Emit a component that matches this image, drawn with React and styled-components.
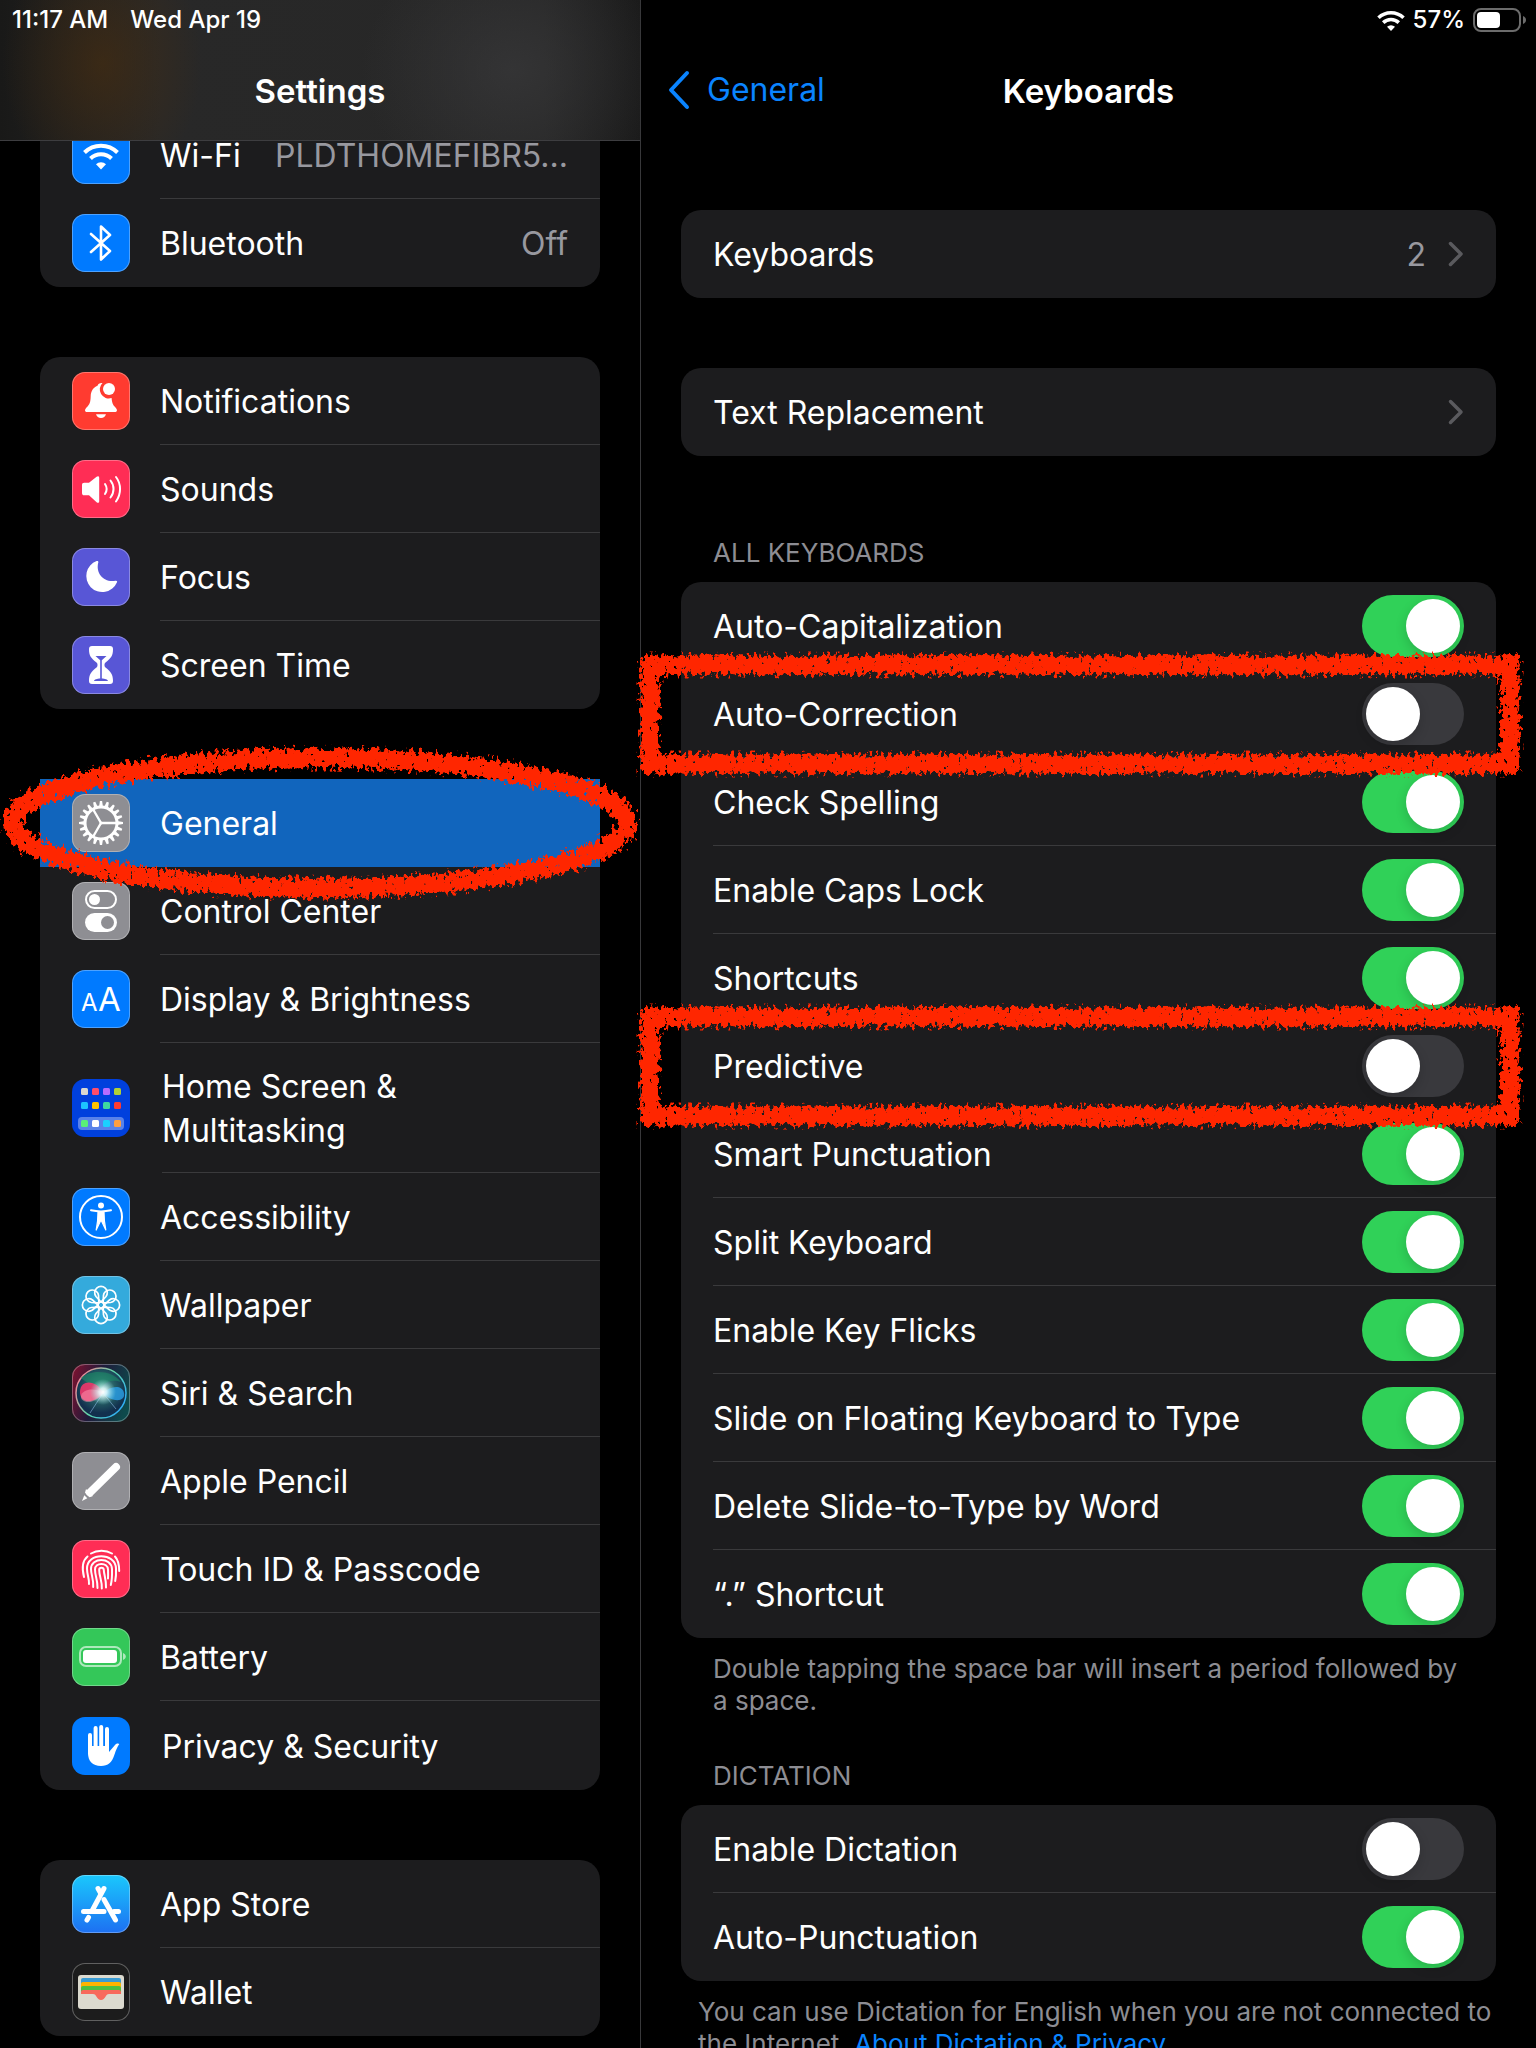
import { useState } from 'react';
import styled, { createGlobalStyle, css } from 'styled-components';

const GlobalStyle = createGlobalStyle`
	* {
		box-sizing: border-box;
	}
	body {
		margin: 0;
		background: #000;
		color: #fff;
		font-family: Inter, 'Liberation Sans', sans-serif;
		font-size: 32px;
		line-height: 44px;
	}
	button {
		font: inherit;
		color: inherit;
		background: none;
		border: 0;
		padding: 0;
		text-align: left;
	}
`;

/* ---------- icons, all drawn on a 58 x 58 tile ---------- */

function WifiIcon() {
	return (
		<g fill="none" stroke="#fff" strokeWidth="4">
			<path d="M12.5 26.5a23.5 23.5 0 0 1 33 0" />
			<path d="M18.5 32.5a15 15 0 0 1 21 0" />
			<path d="M29 43.5l-5-5.2a7 7 0 0 1 10 0z" fill="#fff" stroke="none" />
		</g>
	);
}

function BluetoothIcon() {
	return (
		<path
			d="M19 20l19 17-9 8.5V12.5l9 8.5-19 17"
			fill="none"
			stroke="#fff"
			strokeWidth="2.6"
			strokeLinejoin="round"
			strokeLinecap="round"
		/>
	);
}

function BellIcon() {
	return (
		<g fill="#fff">
			<path d="M29.5 11c-2 0-3.4 1-4 2.8-4.5 1.8-6.6 5.6-6.8 10.2-.2 6.5-1 8.500-4.2 11.5-2.3 2.4-1.8 4.5.8 4.5h27.4c2.6 0 3.1-2.1.8-4.5-2.5-2.4-3.5-4.5-3.900-9.5a9 9 0 0 1-9.1-15z" />
			<path d="M24 42.2h10c-.7 2.4-2.5 3.8-5 3.8s-4.3-1.4-5-3.8z" />
			<circle cx="37" cy="17" r="6" />
		</g>
	);
}

function SoundIcon() {
	return (
		<g fill="none" stroke="#fff" strokeWidth="2" strokeLinecap="round">
			<path
				d="M10 25c0-1.5.8-2.3 2.2-2.3H17l7.6-6c1.3-1 2.6-.6 2.6 1v23.6c0 1.6-1.3 2-2.6 1L17 35.3h-4.8c-1.4 0-2.2-.8-2.2-2.3z"
				fill="#fff"
				stroke="none"
			/>
			<path d="M33 24c2 3 2 7 0 10" />
			<path d="M38.5 20.5c4 5 4 12 0 17" />
			<path d="M44 17c5.4 7 5.4 17 0 24.5" />
		</g>
	);
}

function MoonIcon() {
	return (
		<path
			fill="#fff"
			d="M24.6 13.1c1.2-.5 2 .2 1.7 1.4-3 11 6 20.5 17.2 18.2 1.3-.3 2 .5 1.5 1.6A16 16 0 1 1 24.6 13.1z"
		/>
	);
}

function HourglassIcon() {
	return (
		<g>
			<path
				fill="#fff"
				d="M20 10h18c2 0 3 1 3 3 0 7-2 9-7.5 13.5-1.4 1.2-1.4 3.8 0 5C39 36 41 38.5 41 45c0 2-1 3-3 3H20c-2 0-3-1-3-3 0-6.5 2-9 7.5-13.5 1.4-1.2 1.4-3.8 0-5C19 22 17 20 17 13c0-2 1-3 3-3z"
			/>
			<path
				fill="#5856d6"
				d="M23.5 20h11l-4.7 4.2v18.3c3 .2 6 1 6.2 2.5H22c.2-1.5 3.2-2.3 6.2-2.5V24.2z"
			/>
		</g>
	);
}

const teeth = Array.from({ length: 20 }, (_, i) => i * 18);

function GearIcon() {
	return (
		<g fill="none" stroke="#fff" strokeWidth="3">
			{teeth.map((deg) => (
				<path
					key={deg}
					d="M27 13l.9-6h2.200l.9 6z"
					fill="#fff"
					stroke="none"
					transform={`rotate(${deg} 29 29)`}
				/>
			))}
			<circle cx="29" cy="29" r="16" />
			<path d="M29 29h15M29 29l-7.5-13M29 29l-7.5 13" strokeWidth="2.4" />
			<circle cx="29" cy="29" r="1.5" fill="#fff" stroke="none" />
		</g>
	);
}

function SwitchesIcon() {
	return (
		<g>
			<rect x="14" y="9" width="30" height="17" rx="8.5" fill="none" stroke="#fff" strokeWidth="2" />
			<circle cx="22.5" cy="17.5" r="5.5" fill="#fff" />
			<rect x="13" y="31" width="32" height="19" rx="9.5" fill="#fff" />
			<circle cx="35.5" cy="40.5" r="6.5" fill="#8e8e93" />
		</g>
	);
}

function LettersIcon() {
	return (
		<g fill="#fff" fontFamily="Inter, sans-serif">
			<text x="9" y="41" fontSize="24">
				A
			</text>
			<text x="26" y="41" fontSize="33">
				A
			</text>
		</g>
	);
}

const homeTiles = [
	['#d9d8d0', '#ff4d6a', '#b76cff', '#b0d136'],
	['#1cc3ff', '#ffc200', '#3ed8a0', '#ff3b30'],
	['#5af078', '#ffffff', '#1bd0ff', '#ff9f40'],
];

function HomeIcon() {
	return (
		<g>
			<rect x="6" y="38" width="46" height="13" rx="4" fill="#fff" fillOpacity="0.35" />
			{homeTiles.map((row, y) =>
				row.map((fill, x) => (
					<rect key={fill} x={9 + x * 11} y={[9, 23, 41][y]} width="7" height="7" rx="1.5" fill={fill} />
				))
			)}
		</g>
	);
}

function PersonIcon() {
	return (
		<g fill="none" stroke="#fff" strokeWidth="2" strokeLinecap="round" strokeLinejoin="round">
			<circle cx="29" cy="29" r="21" />
			<circle cx="29" cy="17.5" r="3" fill="#fff" stroke="none" />
			<path d="M19 22.3c6 1.3 14 1.3 20 0" />
			<path
				d="M26 23.5h6c0 6 .2 11 1.8 18.5L29.5 33h-1L24.2 42C25.8 34.5 26 29.5 26 23.5z"
				fill="#fff"
				strokeWidth="1.2"
			/>
		</g>
	);
}

function FlowerIcon() {
	return (
		<g fill="none" stroke="#fff" strokeWidth="1.7">
			{[0, 45, 90, 135, 180, 225, 270, 315].map((deg) => (
				<path
					key={deg}
					d="M29 26l-5-5.500a6.300 6.300 0 1 1 10 0z"
					transform={`rotate(${deg} 29 29)`}
				/>
			))}
			<circle cx="29" cy="29" r="3" />
		</g>
	);
}

function SiriIcon() {
	return (
		<g>
			<defs>
				<linearGradient id="siriBg" x1="0" y1="0.2" x2="1" y2="0.5">
					<stop offset="0" stopColor="#7a1230" />
					<stop offset="0.45" stopColor="#1f1a3a" />
					<stop offset="1" stopColor="#0e4a4c" />
				</linearGradient>
				<linearGradient id="siriRing" x1="0" y1="0.2" x2="1" y2="0.8">
					<stop offset="0" stopColor="#ff7f96" />
					<stop offset="0.5" stopColor="#5fd6a8" />
					<stop offset="1" stopColor="#2aa8ff" />
				</linearGradient>
				<radialGradient id="siriGlow">
					<stop offset="0" stopColor="#fff" />
					<stop offset="0.3" stopColor="#e8ffff" stopOpacity="0.85" />
					<stop offset="1" stopColor="#8fe0e0" stopOpacity="0" />
				</radialGradient>
				<radialGradient id="siriOrb" cx="0.5" cy="0.4">
					<stop offset="0" stopColor="#4f9a92" />
					<stop offset="0.6" stopColor="#235a62" />
					<stop offset="1" stopColor="#12304e" />
				</radialGradient>
			</defs>
			<rect width="58" height="58" rx="13" fill="url(#siriBg)" />
			<circle cx="29" cy="29" r="25" fill="url(#siriOrb)" stroke="url(#siriRing)" strokeWidth="1.5" />
			<path d="M9 14c8-8 30-9 40 4-12-4-20 2-20 11z" fill="#1d8a68" fillOpacity="0.6" />
			<path d="M31 29C25 16 9 15 8 27s13 14 23 2z" fill="#f0356a" fillOpacity="0.9" />
			<path d="M31 29c-8-6-21-4-22 3s13 10 22-3z" fill="#ff9ab4" fillOpacity="0.5" />
			<path d="M31 29c7-7 19-9 21 0s-12 10-21 0z" fill="#2aa0e8" fillOpacity="0.8" />
			<path d="M18 49l13-20 13 16" fill="none" stroke="#9fd0ff" strokeOpacity="0.5" />
			<circle cx="31" cy="28" r="13" fill="url(#siriGlow)" />
			<rect x="0.5" y="0.5" width="57" height="57" rx="12.5" fill="none" stroke="#fff" strokeOpacity="0.3" />
		</g>
	);
}

function PencilIcon() {
	return (
		<g fill="#fff">
			<path d="M44 15L18 40.5" stroke="#fff" strokeWidth="8" strokeLinecap="round" />
			<path d="M14 37l7 7-3.5 1.2-4.5-4.5z" />
			<path d="M12.3 43.2l3 3L10 49z" />
		</g>
	);
}

function FingerIcon() {
	return (
		<g fill="none" stroke="#fff" strokeWidth="2" strokeLinecap="round">
			<path d="M19 13.500c6-3.600 15-3.600 21 0" />
			<path d="M12 37C10 29 10 21 15.500 16.500" />
			<path d="M43 16.500c2.800 3 4.200 7 4.200 14.500" />
			<path d="M17 44c.3-6-2-9-2-15.500 0-16.500 28.500-16.500 29 0 .2 5 0 9-.8 12.500" />
			<path d="M21.200 47c.6-8-2.200-12-2.200-18 0-12 20.500-12 21 0 .2 6 0 11-1.200 16" />
			<path d="M25.500 48c.3-8-2.500-12-2.500-18.500 0-7.500 12.700-7.500 13 0 .1 3.500.2 6 0 9" />
			<path d="M29.800 48.500c.4-8-2.600-12-2.600-18.500 0-3 4.400-3 4.600 0 .2 5 2.400 9 2.200 17.500" />
		</g>
	);
}

function BatteryIcon() {
	return (
		<g fill="#fff">
			<rect x="8" y="19" width="41" height="19" rx="6" fill="none" stroke="#fff" strokeOpacity="0.6" strokeWidth="2" />
			<rect x="11" y="22" width="34" height="13" rx="3" />
			<path d="M51 25c2 .8 2.800 2 2.800 3.500S53 31.200 51 32z" fillOpacity="0.6" />
		</g>
	);
}

function HandIcon() {
	return (
		<g fill="none" stroke="#fff" strokeLinecap="round" strokeLinejoin="round">
			<path d="M18 18v18M23.6 11v20M29.2 10v21M35 12v20" strokeWidth="4" />
			<path
				d="M16 29h21v6l6-7c1.5-1.8 3.5-1.9 4.3-1-1.8 2.2-3.3 6-4.8 10.5C40 45.5 36 49 29 49c-8.5 0-13-5-13-13z"
				fill="#fff"
				stroke="none"
			/>
		</g>
	);
}

function AppStoreIcon() {
	return (
		<g fill="none" stroke="#fff" strokeWidth="5" strokeLinecap="round">
			<path d="M32 13.5L20.5 35" />
			<path d="M11.5 36.500H32M42 36.500h4.500" />
			<path d="M26 13.5l2.500 4.500M32 24.500L43.5 45" />
			<path d="M16.500 42.500l-1.500 2.500" />
		</g>
	);
}

function WalletIcon() {
	return (
		<g>
			<rect x="6" y="12" width="46" height="34" rx="3" fill="#dcdacf" />
			<rect x="9" y="15" width="40" height="8" rx="2" fill="#3a9bd2" />
			<rect x="9" y="19" width="40" height="8" rx="2" fill="#ffb300" />
			<rect x="9" y="23" width="40" height="8" rx="2" fill="#4fbf40" />
			<path
				d="M11 27h36a2 2 0 0 1 2 2v2H37c-1.5 0-2.4.8-3.2 2.2C32.5 35.6 31 37 29 37s-3.5-1.4-4.8-3.8C23.4 31.8 22.5 31 21 31H9v-2a2 2 0 0 1 2-2z"
				fill="#f8695c"
			/>
		</g>
	);
}

const icons = {
	wifi: [WifiIcon, '#007aff'],
	bluetooth: [BluetoothIcon, '#007aff'],
	bell: [BellIcon, '#ff3b30'],
	sound: [SoundIcon, '#ff2d55'],
	moon: [MoonIcon, '#5856d6'],
	hourglass: [HourglassIcon, '#5856d6'],
	gear: [GearIcon, '#8e8e93'],
	switches: [SwitchesIcon, '#8e8e93'],
	letters: [LettersIcon, '#007aff'],
	home: [HomeIcon, '#0040dd'],
	person: [PersonIcon, '#007aff'],
	flower: [FlowerIcon, '#34aadc'],
	siri: [SiriIcon, '#1c1c1e'],
	pencil: [PencilIcon, '#8e8e93'],
	finger: [FingerIcon, '#ff2d55'],
	battery: [BatteryIcon, '#34c759'],
	hand: [HandIcon, '#007aff'],
	appstore: [AppStoreIcon, 'linear-gradient(#1ac8fc, #1d70f2)'],
	wallet: [WalletIcon, '#1c1c1c'],
};

function TileIcon({ name }) {
	const [Drawing, fill] = icons[name];
	return (
		<Tile $fill={fill} $plain={name === 'home' || name === 'hand'}>
			<svg width="58" height="58" viewBox="0 0 58 58" aria-hidden="true">
				<Drawing />
			</svg>
		</Tile>
	);
}

function Chevron() {
	return (
		<svg width="16" height="26" viewBox="0 0 16 26" aria-hidden="true">
			<path
				d="M2.5 2.5L13 13 2.5 23.5"
				fill="none"
				stroke="#5a5a5e"
				strokeWidth="3.5"
				strokeLinecap="round"
				strokeLinejoin="round"
			/>
		</svg>
	);
}

/* ---------- crayon marks over the highlighted rows ---------- */

// noise eats into the blurred stroke; the grown stroke keeps stray grains close to it
function CrayonFilter() {
	return (
		<HiddenSvg aria-hidden="true">
			<filter id="crayon" x="-10%" y="-30%" width="120%" height="160%">
				<feGaussianBlur in="SourceAlpha" stdDeviation="3" result="soft" />
				<feTurbulence type="fractalNoise" baseFrequency="0.26 0.18" numOctaves="3" seed="4" result="noise" />
				<feComposite in="soft" in2="noise" operator="arithmetic" k2="1" k3="1.9" k4="-0.95" />
				<feComponentTransfer result="grain">
					<feFuncA type="linear" slope="9" intercept="-4" />
				</feComponentTransfer>
				<feMorphology in="SourceAlpha" operator="dilate" radius="4" result="grown" />
				<feComposite in="grain" in2="grown" operator="in" result="mark" />
				<feFlood floodColor="#ff2600" />
				<feComposite operator="in" in2="mark" />
			</filter>
		</HiddenSvg>
	);
}

function EllipseMark() {
	return (
		<EllipseSvg aria-hidden="true">
			<ellipse cx="50%" cy="50%" rx="48%" ry="65" fill="none" stroke="#ff2600" strokeWidth="19" filter="url(#crayon)" />
		</EllipseSvg>
	);
}

function BoxMark() {
	return (
		<BoxSvg aria-hidden="true">
			<g filter="url(#crayon)">
				<rect x="0" y="0" width="100%" height="100%" fill="none" stroke="#ff2600" strokeWidth="19" />
			</g>
		</BoxSvg>
	);
}

/* ---------- data ---------- */

const sidebarGroups = [
	[
		{ icon: 'wifi', label: 'Wi-Fi', value: 'PLDTHOMEFIBR5...' },
		{ icon: 'bluetooth', label: 'Bluetooth', value: 'Off' },
	],
	[
		{ icon: 'bell', label: 'Notifications' },
		{ icon: 'sound', label: 'Sounds' },
		{ icon: 'moon', label: 'Focus' },
		{ icon: 'hourglass', label: 'Screen Time' },
	],
	[
		{ icon: 'gear', label: 'General', selected: true },
		{ icon: 'switches', label: 'Control Center' },
		{ icon: 'letters', label: 'Display & Brightness' },
		{ icon: 'home', label: 'Home Screen & Multitasking', wide: true },
		{ icon: 'person', label: 'Accessibility' },
		{ icon: 'flower', label: 'Wallpaper' },
		{ icon: 'siri', label: 'Siri & Search' },
		{ icon: 'pencil', label: 'Apple Pencil' },
		{ icon: 'finger', label: 'Touch ID & Passcode' },
		{ icon: 'battery', label: 'Battery' },
		{ icon: 'hand', label: 'Privacy & Security', wide: true },
	],
	[
		{ icon: 'appstore', label: 'App Store' },
		{ icon: 'wallet', label: 'Wallet' },
	],
];

const keyboardOptions = [
	{ label: 'Auto-Capitalization', on: true },
	{ label: 'Auto-Correction', on: false, marked: true },
	{ label: 'Check Spelling', on: true },
	{ label: 'Enable Caps Lock', on: true },
	{ label: 'Shortcuts', on: true },
	{ label: 'Predictive', on: false, marked: true },
	{ label: 'Smart Punctuation', on: true },
	{ label: 'Split Keyboard', on: true },
	{ label: 'Enable Key Flicks', on: true },
	{ label: 'Slide on Floating Keyboard to Type', on: true },
	{ label: 'Delete Slide-to-Type by Word', on: true },
	{ label: '“.” Shortcut', on: true },
];

const dictationOptions = [
	{ label: 'Enable Dictation', on: false },
	{ label: 'Auto-Punctuation', on: true },
];

/* ---------- rows ---------- */

function SidebarRow({ icon, label, value, selected, wide }) {
	return (
		<NavRow type="button" $selected={selected} $wide={wide}>
			<TileIcon name={icon} />
			<RowBody $line={!selected}>
				<Label>{label}</Label>
				{value && <Value>{value}</Value>}
			</RowBody>
			{selected && <EllipseMark />}
		</NavRow>
	);
}

function ToggleRow({ label, on, marked }) {
	const [checked, setChecked] = useState(on);

	return (
		<OptionRow as="label">
			<RowBody $line>
				<Label>{label}</Label>
				<Switch type="checkbox" role="switch" checked={checked} onChange={() => setChecked(!checked)} />
			</RowBody>
			{marked && <BoxMark />}
		</OptionRow>
	);
}

function App() {
	return (
		<Screen>
			<GlobalStyle />
			<CrayonFilter />
			<Sidebar>
				<SidebarHeader>
					<StatusBar>
						<span>11:17 AM</span>
						<span>Wed Apr 19</span>
					</StatusBar>
					<Title>Settings</Title>
				</SidebarHeader>
				<SidebarList>
					{sidebarGroups.map((rows) => (
						<Card key={rows[0].label}>
							{rows.map((row) => (
								<SidebarRow key={row.label} {...row} />
							))}
						</Card>
					))}
				</SidebarList>
			</Sidebar>

			<Detail>
				<DetailHeader>
					<StatusBar $end>
						<svg width="28" height="21" viewBox="0 0 28 21" aria-hidden="true">
							<g fill="none" stroke="#fff" strokeWidth="3.6">
								<path d="M1.5 7.8a18 18 0 0 1 25 0" />
								<path d="M6.2 12.6a11.5 11.5 0 0 1 15.6 0" />
								<path d="M14 21l-4-4.3a6 6 0 0 1 8 0z" fill="#fff" stroke="none" />
							</g>
						</svg>
						<span>57%</span>
						<svg width="54" height="24" viewBox="0 0 54 24" aria-hidden="true">
							<rect x="1" y="1" width="46" height="22" rx="7" fill="none" stroke="#6c6c6c" strokeWidth="2" />
							<rect x="4" y="4" width="23" height="16" rx="4" fill="#fff" />
							<path d="M50 8c2 .8 3 2.300 3 4s-1 3.200-3 4z" fill="#6c6c6c" />
						</svg>
					</StatusBar>
					<NavBar>
						<BackLink href="#general">
							<svg width="24" height="40" viewBox="0 0 24 40" aria-hidden="true">
								<path
									d="M20 3L4 20l16 17"
									fill="none"
									stroke="#0a84ff"
									strokeWidth="4"
									strokeLinecap="round"
									strokeLinejoin="round"
								/>
							</svg>
							General
						</BackLink>
						<Title>Keyboards</Title>
						<span />
					</NavBar>
				</DetailHeader>

				<DetailList>
					<Card>
						<OptionRow as="button" type="button">
							<RowBody $line>
								<Label>Keyboards</Label>
								<Value>2</Value>
								<Chevron />
							</RowBody>
						</OptionRow>
					</Card>
					<Card>
						<OptionRow as="button" type="button">
							<RowBody $line>
								<Label>Text Replacement</Label>
								<Chevron />
							</RowBody>
						</OptionRow>
					</Card>

					<Section>
						<SectionTitle>ALL KEYBOARDS</SectionTitle>
						<Card>
							{keyboardOptions.map((option) => (
								<ToggleRow key={option.label} {...option} />
							))}
						</Card>
						<Note>Double tapping the space bar will insert a period followed by a space.</Note>
					</Section>

					<Section>
						<SectionTitle>DICTATION</SectionTitle>
						<Card>
							{dictationOptions.map((option) => (
								<ToggleRow key={option.label} {...option} />
							))}
						</Card>
						<Note $wide>
							You can use Dictation for English when you are not connected to the Internet.{' '}
							<a href="#privacy">About Dictation &amp; Privacy</a>
						</Note>
					</Section>
				</DetailList>
			</Detail>
		</Screen>
	);
}

const Screen = styled.div`
	display: grid;
	grid-template-columns: 5fr 7fr;
	height: 100vh;
	overflow: hidden;
`;

const Sidebar = styled.aside`
	overflow: hidden;
`;

const SidebarHeader = styled.header`
	position: relative;
	z-index: 2;
	height: 141px;
	border-bottom: 1px solid #3d3d40;
	background:
		radial-gradient(ellipse 100px 130px at 16% 45%, rgba(74, 46, 14, 0.6), transparent),
		radial-gradient(ellipse 150px 130px at 80% 50%, rgba(60, 60, 62, 0.6), transparent),
		linear-gradient(90deg, #191918, #282828 25%, #272727 85%, #1b1b1b);
`;

const StatusBar = styled.div`
	display: flex;
	align-items: center;
	justify-content: ${({ $end }) => ($end ? 'flex-end' : 'flex-start')};
	gap: ${({ $end }) => ($end ? '8px' : '22px')};
	height: 40px;
	padding: 0 ${({ $end }) => ($end ? '9px' : '12px')};
	font-size: 24px;
	font-weight: 500;
	line-height: 32px;
`;

const Title = styled.h1`
	margin: 0;
	height: 100px;
	font-size: 33px;
	font-weight: 600;
	line-height: 102px;
	text-align: center;
`;

const SidebarList = styled.nav`
	display: flex;
	flex-direction: column;
	gap: 70px;
	margin-top: -30px;
	padding: 0 40px 70px;
`;

const Card = styled.div`
	display: flex;
	flex-direction: column;
	background: #1c1c1e;
	border-radius: 20px;
`;

const RowBody = styled.span`
	display: flex;
	flex: 1;
	align-items: center;
	gap: 22px;
	min-width: 0;
	padding-right: 32px;
	box-shadow: inset 0 -1px ${({ $line }) => ($line ? '#3a3a3c' : 'transparent')};
`;

const Label = styled.span`
	flex: 1 0 auto;
	max-width: 100%;
	padding-top: 2px;
`;

const Value = styled.span`
	padding-top: 2px;
	color: #98989f;
	white-space: nowrap;
`;

const rowBase = css`
	position: relative;
	display: flex;
	min-height: 88px;
	padding-left: 32px;

	&:last-child > ${RowBody} {
		box-shadow: none;
	}
`;

const NavRow = styled.button`
	${rowBase}
	align-items: stretch;
	gap: ${({ $wide }) => ($wide ? '32px' : '30px')};
	min-height: ${({ $wide }) => ($wide ? '89px' : '88px')};
	background: ${({ $selected }) => ($selected ? '#1165bd' : 'none')};

	${RowBody} {
		padding-top: 20px;
		padding-bottom: 20px;
	}
`;

const OptionRow = styled.div`
	${rowBase}
`;

const Tile = styled.span`
	position: relative;
	display: flex;
	align-items: center;
	justify-content: center;
	align-self: center;
	flex: none;
	width: 58px;
	height: 58px;
	border-radius: 13px;
	background: ${({ $fill }) => $fill};
	box-shadow: inset 0 0 0 1px rgba(255, 255, 255, ${({ $plain }) => ($plain ? 0 : 0.3)});
`;

const Switch = styled.input`
	appearance: none;
	flex: none;
	width: 102px;
	height: 62px;
	margin: 0;
	padding: 4px;
	border-radius: 31px;
	background: #39393d;

	&::before {
		content: '';
		display: block;
		width: 54px;
		height: 54px;
		border-radius: 50%;
		background: #fff;
		box-shadow: 0 4px 12px rgba(0, 0, 0, 0.16);
	}
	&:checked {
		background: #30d158;
	}
	&:checked::before {
		margin-left: 40px;
	}
`;

const Detail = styled.main`
	border-left: 1px solid #38383a;
`;

const DetailHeader = styled.header`
	height: 140px;
`;

const NavBar = styled.div`
	display: grid;
	grid-template-columns: 1fr auto 1fr;
	align-items: center;
	padding: 0 26px;
`;

const BackLink = styled.a`
	display: flex;
	align-items: center;
	gap: 16px;
	color: #0a84ff;
	text-decoration: none;
`;

const DetailList = styled.div`
	display: flex;
	flex-direction: column;
	gap: 70px;
	padding: 70px 40px;
`;

const Section = styled.section`
	& + & {
		margin-top: -38px;
	}
`;

const SectionTitle = styled.h2`
	margin: 0;
	padding: 11px 32px 13px;
	color: #8d8d93;
	font-size: 26px;
	font-weight: 400;
	line-height: 32px;
`;

const Note = styled.p`
	margin: 0;
	padding: ${({ $wide }) => ($wide ? '15px 0 0 17px' : '15px 32px 0')};
	color: #8d8d93;
	font-size: 26px;
	line-height: 32px;

	a {
		color: #0a84ff;
		text-decoration: none;
	}
`;

const markBase = css`
	position: absolute;
	z-index: 1;
	overflow: visible;
	pointer-events: none;
`;

const EllipseSvg = styled.svg`
	${markBase}
	left: -40px;
	top: -32px;
	width: calc(100% + 80px);
	height: calc(100% + 64px);
`;

const BoxSvg = styled.svg`
	${markBase}
	left: -31px;
	top: -5px;
	width: calc(100% + 45px);
	height: calc(100% + 11px);
`;

const HiddenSvg = styled.svg`
	position: absolute;
	width: 0;
	height: 0;
`;

export default App;
